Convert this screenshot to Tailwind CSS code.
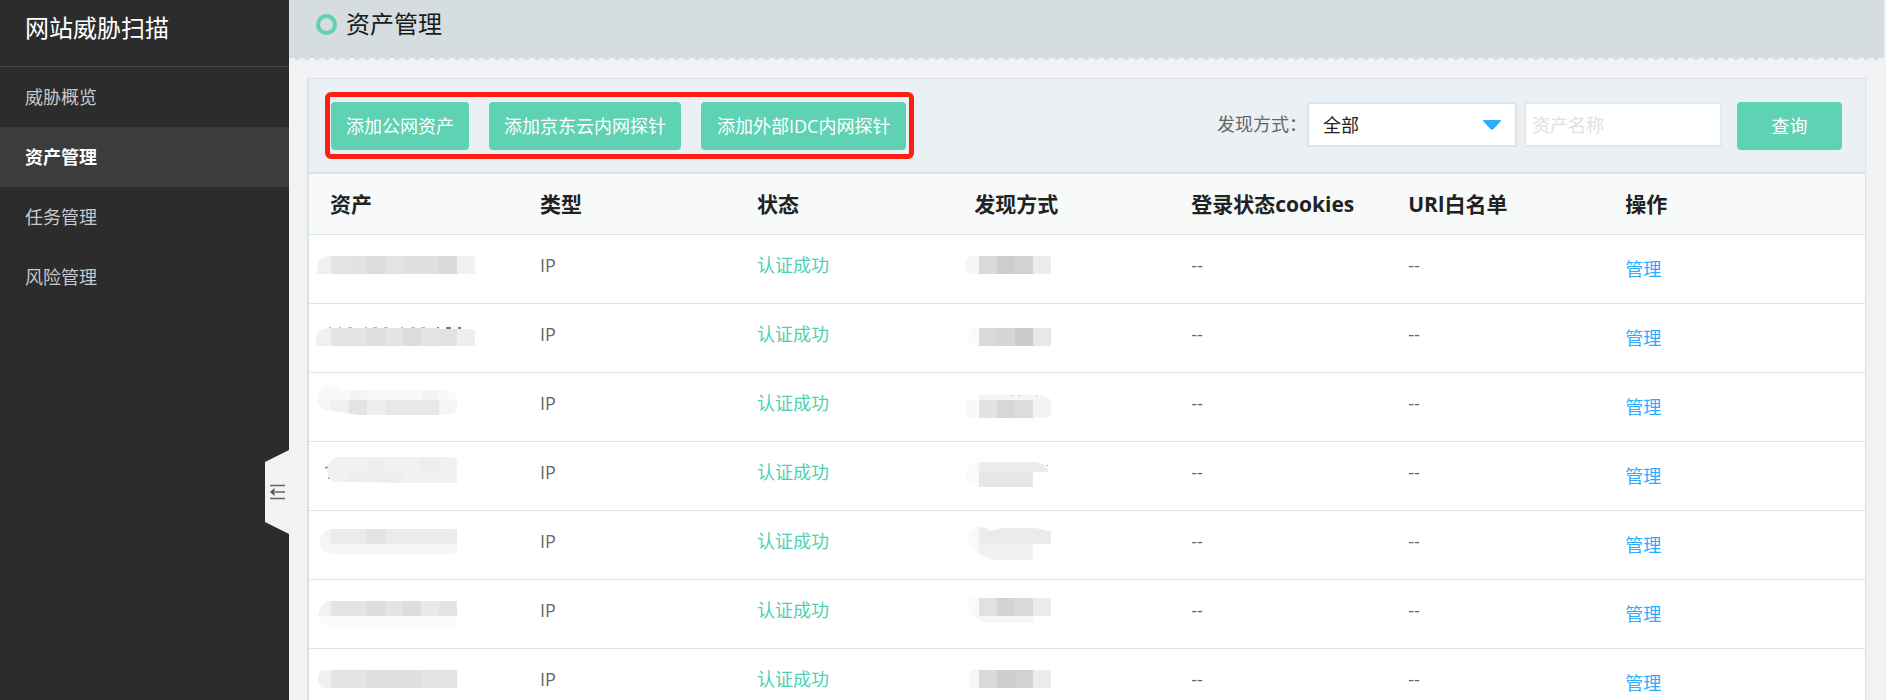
<!DOCTYPE html>
<html lang="zh-CN">
<head>
<meta charset="utf-8">
<title>资产管理</title>
<script src="https://cdn.jsdelivr.net/npm/@tailwindcss/browser@4"></script>
</head>
<body class="bg-[#f2f2f5] font-['Open_Sans','Noto_Sans_CJK_SC',sans-serif] text-lg leading-6 text-[#666]">
<div class="flex min-h-screen">
  <aside class="relative w-[289px] shrink-0 bg-[#2c2c2c] text-[#c9c9c9]">
    <h2 class="flex h-[67px] items-start border-b border-[#444] px-[25px] pt-3 text-2xl leading-8 text-white">网站威胁扫描</h2>
    <nav class="flex flex-col">
      <a href="#" class="flex h-15 items-center px-[25px]">威胁概览</a>
      <a href="#" class="flex h-15 items-center bg-[#3c3c3c] px-[25px] font-bold text-white">资产管理</a>
      <a href="#" class="flex h-15 items-center px-[25px]">任务管理</a>
      <a href="#" class="flex h-15 items-center px-[25px]">风险管理</a>
    </nav>
    <button aria-label="收起菜单" class="absolute right-0 top-[450px] h-21 w-6">
      <svg viewBox="0 0 24 84" class="h-21 w-6"><path d="M0 12 24 0V84L0 72Z" fill="#f2f2f5"/><path d="M5 35.500H20M10 42H20M5 48.500H20" stroke="#666" stroke-width="1.300"/><path d="M5 42 9.500 38V46Z" fill="#555"/></svg>
    </button>
  </aside>

  <main class="min-w-0 flex-1">
    <header class="mr-[2px] flex h-15 items-start gap-[9px] border-b-2 border-dashed border-[#eef1f6] bg-[#d5dde0] px-[27px] pt-2 text-2xl leading-8 text-[#1c1c1c]">
      <svg viewBox="0 0 21 21" class="mt-[6px] size-[21px]"><circle cx="10.500" cy="10.500" r="8.500" fill="none" stroke="#5fd2b4" stroke-width="4"/></svg>
      <h1>资产管理</h1>
    </header>

    <section class="ml-[18px] mr-5 mt-[18px] border border-l-2 border-[#d9e2e9] bg-white">
      <div class="flex items-start justify-between border-b-2 border-[#d9e2e9] bg-[#ebf0f5] pr-[23px] pb-[13px]">
        <div class="ml-4 mt-[13px] flex gap-5 rounded-md border-5 border-[#ff1e12] pt-[5px] pb-1 pl-px pr-[3px] text-white">
          <button class="h-12 rounded bg-[#5fd2b4] px-[15px]">添加公网资产</button>
          <button class="h-12 rounded bg-[#5fd2b4] px-[15px]">添加京东云内网探针</button>
          <button class="h-12 rounded bg-[#5fd2b4] px-4">添加外部IDC内网探针</button>
        </div>
        <div class="mt-[23px] flex items-start">
          <label for="way" class="pt-[10px]">发现方式：</label>
          <div class="relative">
            <select id="way" class="h-[45px] w-[210px] appearance-none border-2 border-[#d8e3ec] bg-white pl-[14px] text-[#222]"><option>全部</option></select>
            <svg viewBox="0 0 18 10" class="pointer-events-none absolute right-4 top-[18px] h-[10px] w-[18px]"><path d="M1 0H17Q18.500 0 17.500 1.500L10.500 9Q9 10.500 7.500 9L.5 1.500Q-.5 0 1 0Z" fill="#29adff"/></svg>
          </div>
          <input aria-label="资产名称" placeholder="资产名称" class="ml-[7px] h-[45px] w-[198px] border-2 border-[#e4e8eb] bg-white px-[6px] placeholder:text-[#dfe0e1]">
          <button class="ml-[15px] h-12 w-[105px] rounded bg-[#5fd2b4] text-white">查询</button>
        </div>
      </div>

      <table class="w-full table-fixed text-left">
        <thead class="bg-[#f8fafa] text-[21px] text-[#222]">
          <tr class="h-15 border-b border-[#dbe3e9] [&>th]:pl-[21px] [&>th]:font-bold">
            <th class="w-[13.5%]">资产</th><th class="w-[13.95%]">类型</th><th class="w-[13.95%]">状态</th><th class="w-[13.95%]">发现方式</th><th class="w-[13.95%]">登录状态cookies</th><th class="w-[13.95%]">URl白名单</th><th>操作</th>
          </tr>
        </thead>
        <tbody class="[&>tr]:h-[69px] [&>tr]:border-b [&>tr]:border-[#dbe3e9] [&_td]:p-0 [&_td]:align-top [&_p]:pl-[21px] [&_p]:pt-[18px] [&_a]:ml-[21px] [&_a]:mt-[22px] [&_a]:inline-block [&_a]:text-[#29adff] [&_svg]:block [&_svg]:h-[68px]">
          <tr>
            <td><svg viewBox="0 0 180 68" class="w-[180px]"><path d="M22 21Q8 22 8 35V37L9 39H22Z" fill="#f0f0f0"/><path d="M22 21h18v18H22z" fill="#e4e4e4"/><path d="M40 21h18v18H40z" fill="#e2e2e2"/><path d="M58 21h18v18H58z" fill="#dcdcdc"/><path d="M76 21h18v18H76z" fill="#e3e3e3"/><path d="M94 21h36v18H94z" fill="#dfdfdf"/><path d="M130 21h18v18h-18z" fill="#dadada"/><path d="M148 21h18v18h-18z" fill="#f1f1f1"/></svg></td>
            <td><p>IP</p></td><td><p class="text-[#50d0b0]">认证成功</p></td>
            <td><svg viewBox="0 0 110 68" class="w-[110px]"><path d="M26 21H18Q12 21 12 30T18 39H26Z" fill="#f6f6f6"/><path d="M26 21h18v18H26z" fill="#d9d9d9"/><path d="M44 21h18v18H44z" fill="#cdcdcd"/><path d="M62 21h18v18H62z" fill="#d2d2d2"/><path d="M80 21h16l2 2v16H80z" fill="#ebebeb"/></svg></td>
            <td><p>--</p></td><td><p>--</p></td><td><a href="#">管理</a></td>
          </tr>
          <tr>
            <td><svg viewBox="0 0 180 68" class="w-[180px]"><path d="M20 23.500h2M30 23.500h2M39 23.500h4M56 23.500h2M64 23.500h4M75 23.500h4M92 23.500h2M102 23.500h4M112 23.500h4" stroke="#bbb"/><path d="M128 24h2M137 24h5M149 24h3" stroke="#777" stroke-width="2"/><path d="M22 24Q7 24 7 35Q7 40 9 42H22Z" fill="#f0f0f0"/><path d="M22 24h36v18H22z" fill="#e4e4e4"/><path d="M58 24h18v18H58z" fill="#dedede"/><path d="M76 24h18v18H76z" fill="#e4e4e4"/><path d="M94 24h18v18H94z" fill="#dcdcdc"/><path d="M112 24h18v18h-18z" fill="#e4e4e4"/><path d="M130 25h18v17h-18z" fill="#e1e1e1"/><path d="M148 25h14l4 2v15h-18z" fill="#efefef"/></svg></td>
            <td><p>IP</p></td><td><p class="text-[#50d0b0]">认证成功</p></td>
            <td><svg viewBox="0 0 110 68" class="w-[110px]"><path d="M26 24H19Q15 27 15 33T20 42H26Z" fill="#fafafa"/><path d="M26 24h18v18H26z" fill="#d9d9d9"/><path d="M44 24h18v18H44z" fill="#d6d6d6"/><path d="M62 24h18v18H62z" fill="#ccc"/><path d="M80 24h18v18H80z" fill="#e8e8e8"/></svg></td>
            <td><p>--</p></td><td><p>--</p></td><td><a href="#">管理</a></td>
          </tr>
          <tr>
            <td><svg viewBox="0 0 180 68" class="w-[180px]"><path d="M8 27Q10 12 21 12Q27 12 31 15T45 17H136Q148 18 148 24V27Z" fill="#f9f9f9"/><path d="M40 17h18v10H40zM112 17h18v10h-18z" fill="#f4f4f4"/><path d="M58 17h36v10H58z" fill="#f7f7f7"/><path d="M8 27Q11 38 22 38V27Z" fill="#f6f6f6"/><path d="M22 27h18v13.500L22 38z" fill="#f0f0f0"/><path d="M40 27h18v15H50L40 40.500z" fill="#e3e3e3"/><path d="M58 27h18v15H58z" fill="#eee"/><path d="M76 27h54v15H76z" fill="#e8e8e8"/><path d="M130 27h18v10Q145 42 136 42h-6z" fill="#f6f6f6"/></svg></td>
            <td><p>IP</p></td><td><p class="text-[#50d0b0]">认证成功</p></td>
            <td><svg viewBox="0 0 110 68" class="w-[110px]"><path d="M26 22H83Q98 23 98 29V42L95 45H80V27H26Z" fill="#f4f4f4"/><path d="M58 22.500h2M65 22.500h2M83 22.500h2" stroke="#ccc"/><path d="M26 27H16Q12 29 12 35T18 45H26Z" fill="#f9f9f9"/><path d="M26 27h18v18H26z" fill="#e2e2e2"/><path d="M44 27h18v18H44z" fill="#d7d7d7"/><path d="M62 27h18v18H62z" fill="#ddd"/></svg></td>
            <td><p>--</p></td><td><p>--</p></td><td><a href="#">管理</a></td>
          </tr>
          <tr>
            <td><svg viewBox="0 0 180 68" class="w-[180px]"><path d="M16 25.500h3M19 36h2" stroke="#888" stroke-width="1.500"/><path d="M18 30Q20 15 30 15H143Q148 16 148 19V41H94L28 40Q18 38 18 30Z" fill="#f1f1f1"/><path d="M58 15h18v15H58zM112 16h18v14h-18zM40 30h54v10H40z" fill="#ededed"/></svg></td>
            <td><p>IP</p></td><td><p class="text-[#50d0b0]">认证成功</p></td>
            <td><svg viewBox="0 0 110 68" class="w-[110px]"><path d="M26 20Q13 21 13 32Q13 45 26 45Z" fill="#fafafa"/><path d="M26 20H80Q92 20 96 30H26Z" fill="#ececec"/><path d="M26 30h54v15H26z" fill="#e6e6e6"/><path d="M94 23.500h1" stroke="#999"/></svg></td>
            <td><p>--</p></td><td><p>--</p></td><td><a href="#">管理</a></td>
          </tr>
          <tr>
            <td><svg viewBox="0 0 180 68" class="w-[180px]"><path d="M22 18Q11 20 11 31V33H22Z" fill="#f5f5f5"/><path d="M22 18H146L148 19V33H22Z" fill="#ebebeb"/><path d="M58 18h18v15H58z" fill="#e3e3e3"/><path d="M11 33H148V42L145 43H22Q12 42 11 33Z" fill="#f6f6f6"/></svg></td>
            <td><p>IP</p></td><td><p class="text-[#50d0b0]">认证成功</p></td>
            <td><svg viewBox="0 0 110 68" class="w-[110px]"><path d="M26 16Q15 19 15 29Q17 38 26 43Z" fill="#f9f9f9"/><path d="M26 16Q32 16 37 20L50 17H80Q90 18 94 20H98V33H26Z" fill="#ebebeb"/><path d="M26 33H80V49H45Q34 48 26 43Z" fill="#f0f1f1"/></svg></td>
            <td><p>--</p></td><td><p>--</p></td><td><a href="#">管理</a></td>
          </tr>
          <tr>
            <td><svg viewBox="0 0 180 68" class="w-[180px]"><path d="M22 21Q11 22 9 36H22Z" fill="#f2f2f2"/><path d="M22 21H148V36H22Z" fill="#e4e4e4"/><path d="M58 21h18v15H58zM94 21h18v15H94z" fill="#ddd"/><path d="M112 21h18v15h-18z" fill="#e9e9e9"/><path d="M9 36H148V46H22Q13 46 9 36Z" fill="#fbfbfb"/></svg></td>
            <td><p>IP</p></td><td><p class="text-[#50d0b0]">认证成功</p></td>
            <td><svg viewBox="0 0 110 68" class="w-[110px]"><path d="M26 18H20Q15 19 15 29Q15 34 19 36H26Z" fill="#f9f9f9"/><path d="M26 18h18v18H26z" fill="#e1e1e1"/><path d="M44 18h18v18H44z" fill="#d3d3d3"/><path d="M62 18h18v18H62z" fill="#dadada"/><path d="M80 18h18v18H80z" fill="#ebebeb"/><path d="M22 36H80V43H36Q26 42 22 36Z" fill="#f6f6f6"/></svg></td>
            <td><p>--</p></td><td><p>--</p></td><td><a href="#">管理</a></td>
          </tr>
          <tr>
            <td><svg viewBox="0 0 180 68" class="w-[180px]"><path d="M22 21H13Q9 24 9 31Q10 37 14 39H22Z" fill="#f0f0f0"/><path d="M22 21H148V39H22Z" fill="#e4e4e4"/><path d="M58 21h54v18H58z" fill="#dedede"/></svg></td>
            <td><p>IP</p></td><td><p class="text-[#50d0b0]">认证成功</p></td>
            <td><svg viewBox="0 0 110 68" class="w-[110px]"><path d="M26 21H19Q16 24 16 31T20 39H26Z" fill="#f6f6f6"/><path d="M26 21h18v18H26z" fill="#d9d9d9"/><path d="M44 21h18v18H44z" fill="#cecece"/><path d="M62 21h18v18H62z" fill="#d2d2d2"/><path d="M80 21h18v18H80z" fill="#ebebeb"/></svg></td>
            <td><p>--</p></td><td><p>--</p></td><td><a href="#">管理</a></td>
          </tr>
        </tbody>
      </table>
    </section>
  </main>
</div>
</body>
</html>
